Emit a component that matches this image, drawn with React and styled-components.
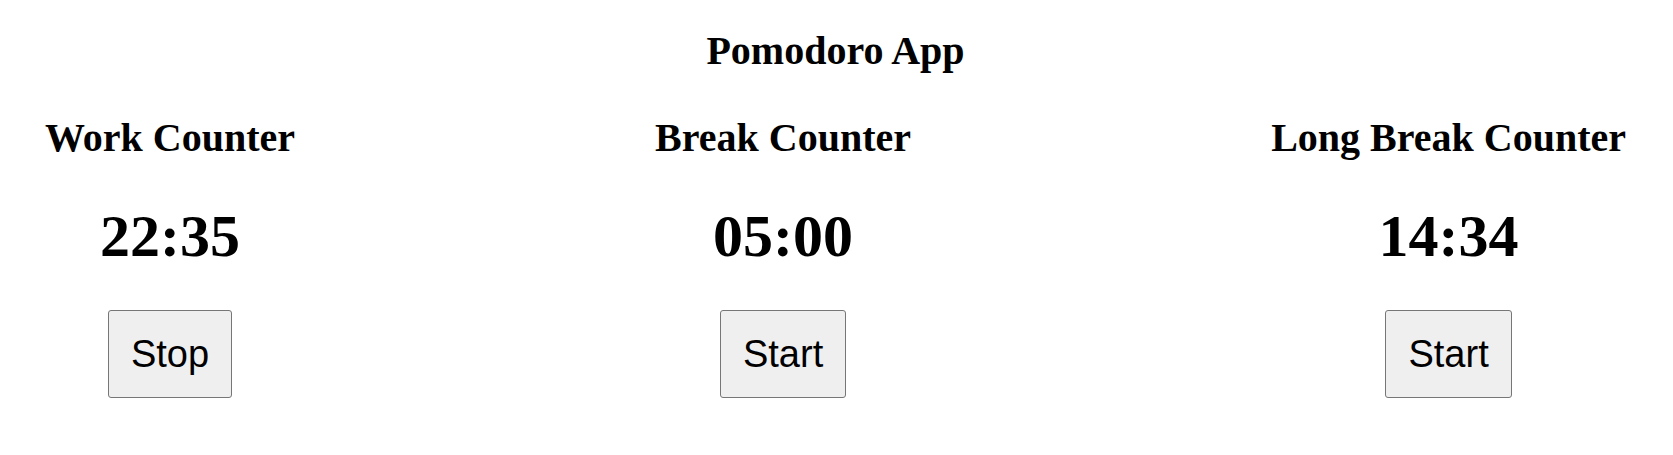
import React from 'react';
import styled, { createGlobalStyle } from 'styled-components';

const GlobalStyle = createGlobalStyle`
  body {
    margin: 0;
    padding: 0 10px 0 8px;
    background: #ffffff;
    color: #000000;
    font-family: "Liberation Serif", "Times New Roman", serif;
  }
`;

const Page = styled.div`
  padding-top: 28px;
`;

const Title = styled.h1`
  margin: 0 0 26px;
  font-size: 40px;
  line-height: 46px;
  font-weight: bold;
  text-align: center;
`;

const Counters = styled.div`
  display: flex;
  justify-content: space-between;
`;

const Counter = styled.div`
  display: flex;
  flex-direction: column;
  align-items: center;
  padding: 15px 37px 0;
`;

const Heading = styled.h2`
  margin: 0;
  font-size: 40px;
  line-height: 46px;
  font-weight: bold;
`;

const Time = styled.div`
  margin-top: 41px;
  font-size: 60px;
  line-height: 69px;
  font-weight: bold;
`;

const Button = styled.button`
  margin-top: 39px;
  padding: 21px 22px;
  font-family: "Liberation Sans", Arial, sans-serif;
  font-size: 38px;
  line-height: 44px;
  color: #000000;
  background-color: #efefef;
  border: 1px solid #767676;
  border-radius: 3px;
`;

const counters = [
  { name: 'Work Counter', time: '22:35', action: 'Stop' },
  { name: 'Break Counter', time: '05:00', action: 'Start' },
  { name: 'Long Break Counter', time: '14:34', action: 'Start' },
];

function App() {
  return (
    <Page>
      <GlobalStyle />
      <Title>Pomodoro App</Title>
      <Counters>
        {counters.map((c) => (
          <Counter key={c.name}>
            <Heading>{c.name}</Heading>
            <Time>{c.time}</Time>
            <Button>{c.action}</Button>
          </Counter>
        ))}
      </Counters>
    </Page>
  );
}

export default App;
